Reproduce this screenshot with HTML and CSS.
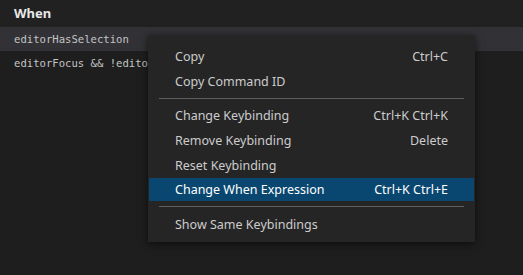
FILE: index.html
```html
<!DOCTYPE html>
<html lang="en">
<head>
    <meta charset="UTF-8">
    <title>Keybindings</title>
    <link rel="stylesheet" href="styles.css">
</head>
<body>
    <div class="table">
        <div class="head">When</div>
        <div class="row selected">editorHasSelection</div>
        <div class="row">editorFocus &amp;&amp; !editorReadonly</div>
    </div>

    <!-- context menu over the table -->
    <div class="menu">
        <div class="item"><span>Copy</span><span class="key">Ctrl+C</span></div>
        <div class="item"><span>Copy Command ID</span></div>
        <div class="sep"></div>
        <div class="item"><span>Change Keybinding</span><span class="key">Ctrl+K Ctrl+K</span></div>
        <div class="item"><span>Remove Keybinding</span><span class="key">Delete</span></div>
        <div class="item"><span>Reset Keybinding</span></div>
        <div class="item active"><span>Change When Expression</span><span class="key">Ctrl+K Ctrl+E</span></div>
        <div class="sep"></div>
        <div class="item"><span>Show Same Keybindings</span></div>
    </div>
</body>
</html>
```

FILE: styles.css
```css
body {
    margin: 0;
    width: 523px;
    height: 275px;
    background-color: #1e1e1e;
    font-family: "Noto Sans", sans-serif;
    overflow: hidden;
    position: relative;
}
.table {
    display: flex;
    flex-direction: column;
}
.head {
    height: 27px;
    line-height: 26px;
    padding-left: 14px;
    font-size: 13px;
    font-weight: bold;
    color: #e8e8e8;
    background-color: #212121;
}
.row {
    height: 24px;
    line-height: 24px;
    padding-left: 14px;
    font-family: "DejaVu Sans Mono", monospace;
    font-size: 10.6px;
    color: #c4c4c4;
}
.row.selected {
    background-color: #323236;
}
.menu {
    position: absolute;
    left: 148px;
    top: 35px;
    width: 327px;
    height: 207px;
    box-sizing: border-box;
    display: flex;
    flex-direction: column;
    padding: 9.3px 1px 0;
    background-color: #252526;
    box-shadow: 0 2px 8px rgba(0, 0, 0, 0.6);
    font-size: 12.5px;
    color: #cccccc;
}
.item {
    display: flex;
    justify-content: space-between;
    align-items: center;
    flex: none;
    height: 23px;
    margin: 0.85px 0;
    padding: 0 26px;
}
.item.active {
    background-color: #094771;
    color: #ffffff;
}
.sep {
    flex: none;
    height: 1px;
    margin: 4px 10px 4.7px;
    background-color: #5f5f5f;
}
```
